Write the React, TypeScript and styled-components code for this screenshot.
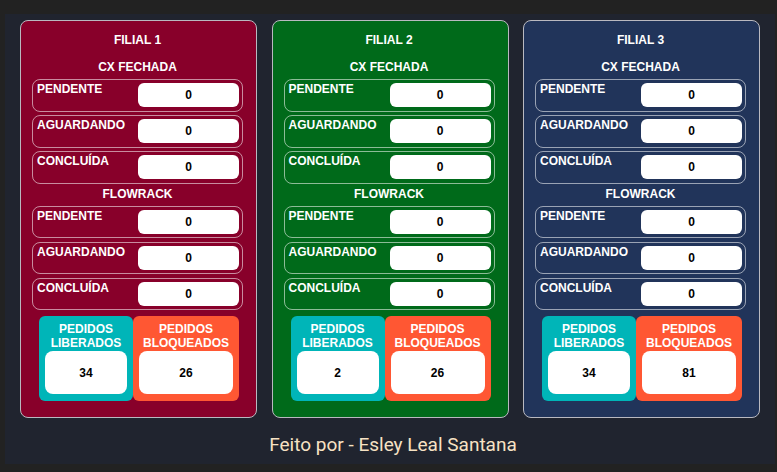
import React from "react";
import styled, { createGlobalStyle } from "styled-components";

const Global = createGlobalStyle`
  html, body { margin: 0; padding: 0; background: #222222; }
  body { font-family: "Liberation Sans", Arial, sans-serif; }
`;

const Outer = styled.div`
  padding: 14px 2px 8px 5px;
  width: 777px;
  height: 472px;
  box-sizing: border-box;
`;

const Container = styled.div`
  background: #20242f;
  padding: 6px 15px 7px 15px;
  box-sizing: border-box;
  height: 450px;
`;

const Cards = styled.div`
  display: flex;
  gap: 14.5px;
`;

const Card = styled.div<{ $bg: string }>`
  width: 237px;
  height: 398px;
  box-sizing: border-box;
  background: ${(p) => p.$bg};
  border: 1px solid #b9b9c0;
  border-radius: 8px;
  padding: 11px 13px 16px 11px;
  color: #ffffff;
  display: flex;
  flex-direction: column;
`;

const Title = styled.div`
  font-size: 12px;
  font-weight: 700;
  line-height: 16px;
  text-align: center;
  margin-bottom: 9px;
`;

const SectionTitle = styled.div`
  font-size: 12px;
  font-weight: 700;
  line-height: 16px;
  text-align: center;
  margin: 2px 0 4px;
`;

const Rows = styled.div`
  display: flex;
  flex-direction: column;
  gap: 3.5px;
`;

const Row = styled.div`
  height: 32.5px;
  box-sizing: border-box;
  border: 1px solid rgba(255, 255, 255, 0.55);
  border-radius: 8px;
  padding: 3px 3px 0 4px;
  display: flex;
  align-items: flex-start;
  justify-content: space-between;
`;

const Label = styled.span`
  font-size: 12px;
  font-weight: 700;
  line-height: 13px;
`;

const Value = styled.div`
  width: 101px;
  height: 24px;
  background: #ffffff;
  border-radius: 6px;
  color: #000000;
  font-size: 12px;
  font-weight: 700;
  display: flex;
  align-items: center;
  justify-content: center;
`;

const Bottom = styled.div`
  display: flex;
  justify-content: center;
  margin-top: 6px;
  padding-left: 3px;
`;

const Stat = styled.div<{ $bg: string; $w: number }>`
  width: ${(p) => p.$w}px;
  height: 85px;
  box-sizing: border-box;
  background: ${(p) => p.$bg};
  border-radius: 6px;
  padding: 6px 6px 7px;
  display: flex;
  flex-direction: column;
  align-items: center;
`;

const StatLabel = styled.div`
  font-size: 12px;
  font-weight: 700;
  line-height: 14px;
  text-align: center;
  color: #ffffff;
`;

const StatValue = styled.div`
  margin-top: 1px;
  align-self: stretch;
  flex: 1;
  background: #ffffff;
  border-radius: 8px;
  color: #000000;
  font-size: 12px;
  font-weight: 700;
  display: flex;
  align-items: center;
  justify-content: center;
`;

const Footer = styled.div`
  margin-top: 15px;
  padding-left: 6px;
  text-align: center;
  font-family: Roboto, "Noto Sans", sans-serif;
  font-size: 19px;
  line-height: 24px;
  color: #f7e2c4;
`;

type Filial = { name: string; bg: string; lib: number; bloq: number };

const filiais: Filial[] = [
  { name: "FILIAL 1", bg: "#88002a", lib: 34, bloq: 26 },
  { name: "FILIAL 2", bg: "#006a1a", lib: 2, bloq: 26 },
  { name: "FILIAL 3", bg: "#21345a", lib: 34, bloq: 81 },
];

const statuses = ["PENDENTE", "AGUARDANDO", "CONCLUÍDA"];

const Section = ({ title }: { title: string }) => (
  <>
    <SectionTitle>{title}</SectionTitle>
    <Rows>
      {statuses.map((s) => (
        <Row key={s}>
          <Label>{s}</Label>
          <Value>0</Value>
        </Row>
      ))}
    </Rows>
  </>
);

export default function App() {
  return (
    <>
      <Global />
      <Outer>
        <Container>
          <Cards>
            {filiais.map((f) => (
              <Card key={f.name} $bg={f.bg}>
                <Title>{f.name}</Title>
                <Section title="CX FECHADA" />
                <Section title="FLOWRACK" />
                <Bottom>
                  <Stat $bg="#00b5b8" $w={94}>
                    <StatLabel>
                      PEDIDOS
                      <br />
                      LIBERADOS
                    </StatLabel>
                    <StatValue>{f.lib}</StatValue>
                  </Stat>
                  <Stat $bg="#ff5733" $w={106}>
                    <StatLabel>
                      PEDIDOS
                      <br />
                      BLOQUEADOS
                    </StatLabel>
                    <StatValue>{f.bloq}</StatValue>
                  </Stat>
                </Bottom>
              </Card>
            ))}
          </Cards>
          <Footer>Feito por - Esley Leal Santana</Footer>
        </Container>
      </Outer>
    </>
  );
}
